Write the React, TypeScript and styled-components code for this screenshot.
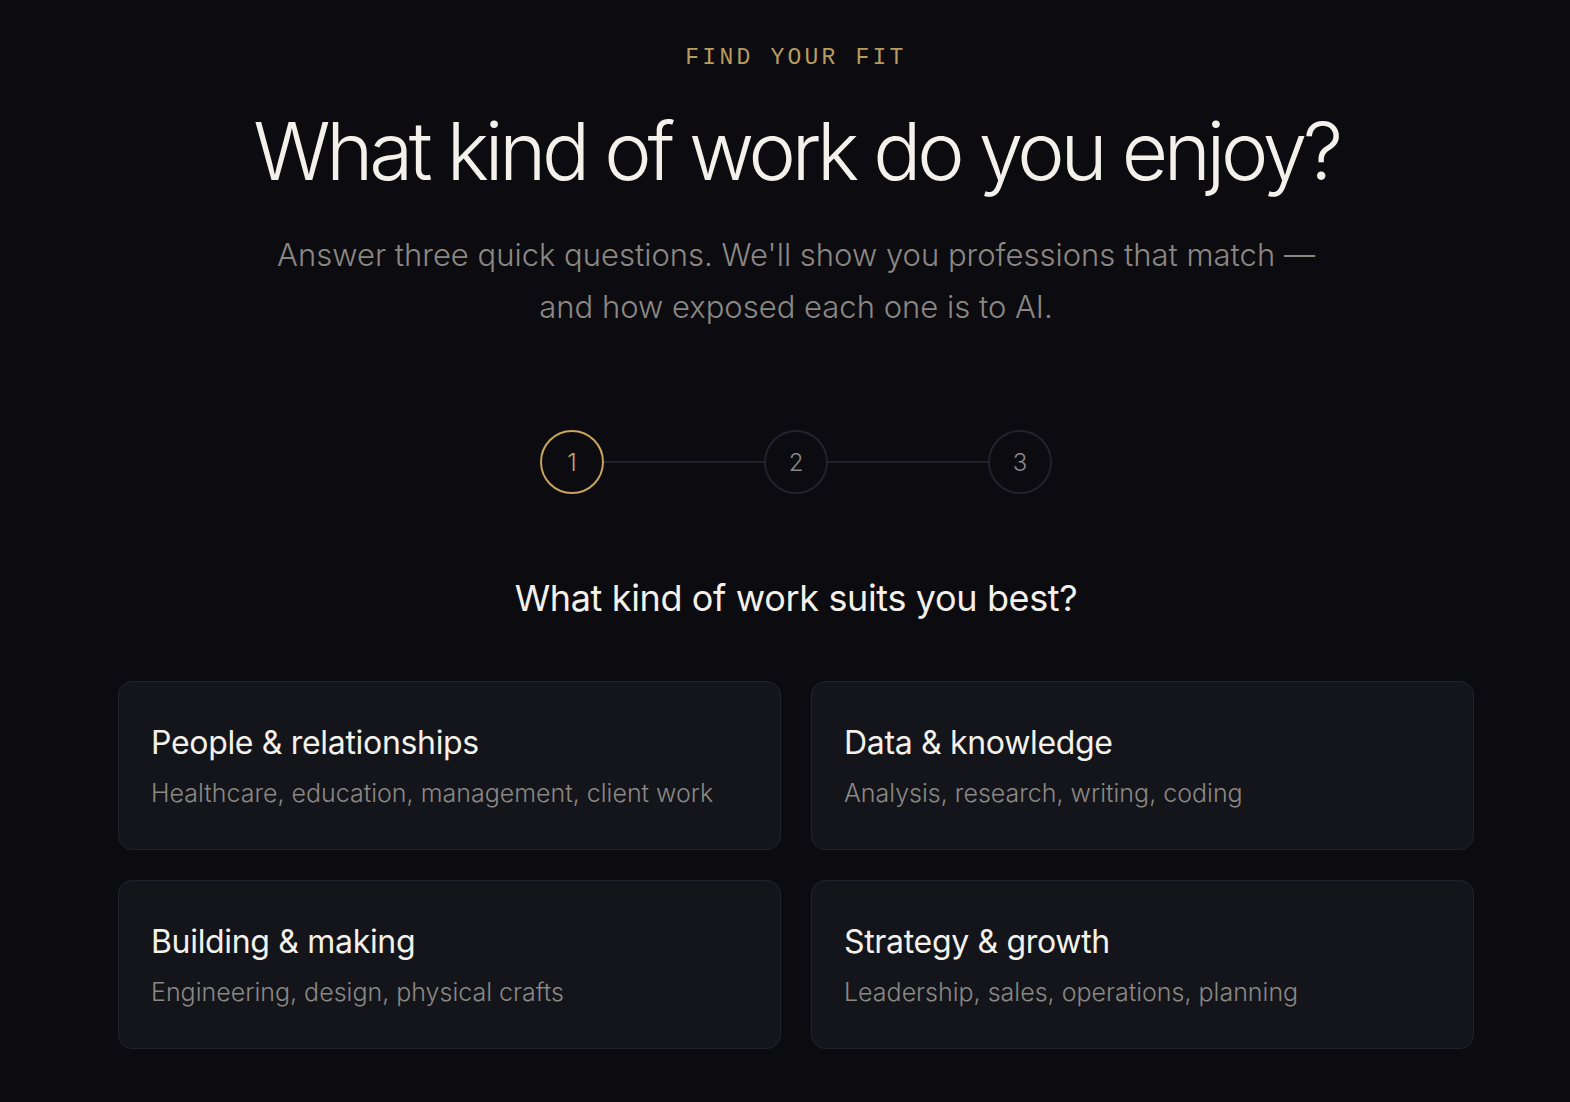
import styled, { createGlobalStyle } from "styled-components";

const GlobalStyle = createGlobalStyle`
  html, body {
    margin: 0;
    padding: 0;
    background: #0b0b10;
  }
  body {
    font-family: Inter, "Noto Sans", sans-serif;
    color: #f2efe8;
  }
`;

const Page = styled.main`
  min-height: 1102px;
  box-sizing: border-box;
  padding: 44px 96px 60px 118px;
  display: flex;
  flex-direction: column;
  align-items: center;
`;

const Eyebrow = styled.p`
  margin: 0;
  font-family: "Liberation Mono", "DejaVu Sans Mono", monospace;
  font-size: 23px;
  letter-spacing: 0.14em;
  color: #b99b60;
  line-height: 28px;
`;

const Headline = styled.h1`
  margin: 33px 0 0;
  font-size: 80px;
  font-weight: 300;
  letter-spacing: -0.053em;
  line-height: 92px;
  color: #f3f1ea;
`;

const Lead = styled.p`
  margin: 32px 0 0;
  max-width: 1080px;
  text-align: center;
  font-size: 31px;
  font-weight: 300;
  line-height: 52px;
  color: #8b8883;
`;

const Steps = styled.div`
  margin-top: 97px;
  display: flex;
  align-items: center;
`;

const Step = styled.div<{ $active?: boolean }>`
  width: 64px;
  height: 64px;
  box-sizing: border-box;
  border-radius: 50%;
  border: 2px solid ${(p) => (p.$active ? "#c9a45e" : "#22222d")};
  display: flex;
  align-items: center;
  justify-content: center;
  font-size: 24px;
  font-weight: 300;
  color: ${(p) => (p.$active ? "#c9a45e" : "#8b8883")};
`;

const Connector = styled.div`
  width: 160px;
  height: 2px;
  background: #22222d;
`;

const Question = styled.h2`
  margin: 82px 0 0;
  font-size: 36px;
  font-weight: 400;
  letter-spacing: -0.01em;
  color: #f3f1ea;
`;

const Grid = styled.div`
  margin-top: 61px;
  width: 100%;
  display: grid;
  grid-template-columns: 1fr 1fr;
  gap: 30px;
`;

const Card = styled.button`
  height: 169px;
  box-sizing: border-box;
  padding: 0 32px;
  background: #14151b;
  border: 1.5px solid #22232e;
  border-radius: 14px;
  text-align: left;
  font-family: inherit;
  display: flex;
  flex-direction: column;
  justify-content: center;
  gap: 16px;
  cursor: pointer;
`;

const CardTitle = styled.span`
  font-size: 32px;
  font-weight: 400;
  letter-spacing: -0.01em;
  color: #f3f1ea;
`;

const CardText = styled.span`
  font-size: 25px;
  font-weight: 300;
  color: #8b8883;
`;

const options = [
  {
    title: "People & relationships",
    text: "Healthcare, education, management, client work",
  },
  { title: "Data & knowledge", text: "Analysis, research, writing, coding" },
  { title: "Building & making", text: "Engineering, design, physical crafts" },
  {
    title: "Strategy & growth",
    text: "Leadership, sales, operations, planning",
  },
];

const App = () => {
  return (
    <>
      <GlobalStyle />
      <Page>
        <Eyebrow>FIND YOUR FIT</Eyebrow>
        <Headline>What kind of work do you enjoy?</Headline>
        <Lead>
          Answer three quick questions. We'll show you professions that match —
          and how exposed each one is to AI.
        </Lead>

        <Steps>
          <Step $active>1</Step>
          <Connector />
          <Step>2</Step>
          <Connector />
          <Step>3</Step>
        </Steps>

        <Question>What kind of work suits you best?</Question>

        <Grid>
          {options.map((o) => (
            <Card key={o.title}>
              <CardTitle>{o.title}</CardTitle>
              <CardText>{o.text}</CardText>
            </Card>
          ))}
        </Grid>
      </Page>
    </>
  );
};

export default App;
